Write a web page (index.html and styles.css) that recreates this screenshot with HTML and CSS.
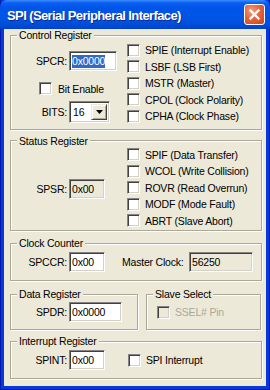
FILE: index.html
```html
<!DOCTYPE html>
<html>
<head>
	<title>SPI (Serial Peripheral Interface)</title>
	<link rel="stylesheet" href="styles.css">
</head>
<body>

	<div class="window">

		<div class="titlebar">
			<span class="title">SPI (Serial Peripheral Interface)</span>
			<div class="close">
				<svg width="13" height="13" viewBox="0 0 13 13"><path d="M2.5 2.5 L10.5 10.5 M10.5 2.5 L2.5 10.5" stroke="#fff" stroke-width="2.4" stroke-linecap="square"/></svg>
			</div>
		</div>

		<div class="client">

			<fieldset class="group control">
				<legend>Control Register</legend>
				<div class="left">
					<div class="row spcr">
						<span class="label">SPCR:</span>
						<div class="edit w47"><span class="sel">0x0000</span></div>
					</div>
					<div class="row bitenable">
						<div class="check"></div>
						<span>Bit Enable</span>
					</div>
					<div class="row bits">
						<span class="label">BITS:</span>
						<div class="combo">
							<span class="value">16</span>
							<div class="drop">
								<svg width="7" height="4" viewBox="0 0 7 4"><path d="M0 0 H7 L3.5 4 Z" fill="#000"/></svg>
							</div>
						</div>
					</div>
				</div>
				<div class="checks">
					<div class="crow"><div class="check"></div><span>SPIE (Interrupt Enable)</span></div>
					<div class="crow"><div class="check"></div><span>LSBF (LSB First)</span></div>
					<div class="crow"><div class="check"></div><span>MSTR (Master)</span></div>
					<div class="crow"><div class="check"></div><span>CPOL (Clock Polarity)</span></div>
					<div class="crow"><div class="check"></div><span>CPHA (Clock Phase)</span></div>
				</div>
			</fieldset>

			<fieldset class="group status">
				<legend>Status Register</legend>
				<div class="left">
					<div class="row">
						<span class="label">SPSR:</span>
						<div class="edit w35 readonly">0x00</div>
					</div>
				</div>
				<div class="checks">
					<div class="crow"><div class="check"></div><span>SPIF (Data Transfer)</span></div>
					<div class="crow"><div class="check"></div><span>WCOL (Write Collision)</span></div>
					<div class="crow"><div class="check"></div><span>ROVR (Read Overrun)</span></div>
					<div class="crow"><div class="check"></div><span>MODF (Mode Fault)</span></div>
					<div class="crow"><div class="check"></div><span>ABRT (Slave Abort)</span></div>
				</div>
			</fieldset>

			<fieldset class="group clock">
				<legend>Clock Counter</legend>
				<div class="row">
					<span class="label">SPCCR:</span>
					<div class="edit w35">0x00</div>
					<span class="master">Master Clock:</span>
					<div class="edit w63 readonly">56250</div>
				</div>
			</fieldset>

			<div class="pair">
				<fieldset class="group data">
					<legend>Data Register</legend>
					<div class="row">
						<span class="label">SPDR:</span>
						<div class="edit w53">0x0000</div>
					</div>
				</fieldset>
				<fieldset class="group slave">
					<legend>Slave Select</legend>
					<div class="crow disabled"><div class="check"></div><span>SSEL# Pin</span></div>
				</fieldset>
			</div>

			<fieldset class="group interrupt">
				<legend>Interrupt Register</legend>
				<div class="row">
					<span class="label">SPINT:</span>
					<div class="edit w35">0x00</div>
					<div class="crow"><div class="check"></div><span>SPI Interrupt</span></div>
				</div>
			</fieldset>

		</div>
	</div>

</body>
</html>
```

FILE: styles.css
```css
body {
	margin: 0;
	background-color: #ECE9D8;
	font-family: 'Liberation Sans', Arial, sans-serif;
	font-size: 10.5px;
	letter-spacing: -0.2px;
	color: #000;
}

.window {
	width: 270px;
	height: 390px;
	box-sizing: border-box;
	display: flex;
	flex-direction: column;
	padding: 0 4px 4px 4px;
	background-color: #0838D8;
	box-shadow: inset 1px 0 #0019B0, inset -1px 0 #001AA8, inset 0 -1px #001AA8;
}

/* Title bar */
.titlebar {
	height: 29px;
	flex: none;
	display: flex;
	align-items: center;
	margin: 0 -4px;
	padding: 0 5px 0 7px;
	border-radius: 7px 7px 0 0;
	background: linear-gradient(#3A8CFF 0, #0A5EF0 3px, #0055E8 8px, #0054E3 20px, #0048D0 27px, #0041C6 29px);
}

.titlebar .title {
	flex: 1;
	color: white;
	font-weight: bold;
	font-size: 13px;
	letter-spacing: -0.6px;
	padding-top: 1px;
	text-shadow: 1px 1px #0C2A8C;
}

.titlebar .close {
	width: 21px;
	height: 21px;
	box-sizing: border-box;
	display: flex;
	align-items: center;
	justify-content: center;
	border: 1px solid white;
	border-radius: 3px;
	background: radial-gradient(circle at 35% 30%, #F29A7E 0, #E5643F 45%, #D0411D 100%);
}

/* Client area */
.client {
	flex: 1;
	display: flex;
	flex-direction: column;
	background-color: #ECE9D8;
	padding: 0 4px 0 6px;
}

.group {
	margin: 0;
	padding: 0;
	min-width: 0;
	border: 1px solid #ACA899;
	box-shadow: 1px 1px 0 white, inset 1px 1px 0 white;
	display: flex;
}

.group legend {
	margin-left: 6px;
	padding: 0 2px;
	line-height: 12px;
	background-color: #ECE9D8;
}

.row {
	display: flex;
	align-items: center;
}

.label {
	width: 56px;
	margin-right: 2px;
	text-align: right;
	flex: none;
}

.edit {
	height: 20px;
	box-sizing: border-box;
	display: flex;
	align-items: center;
	padding-left: 2px;
	background-color: white;
	border: 1px solid;
	border-color: #848284 white white #848284;
	box-shadow: inset 1px 1px #404040, inset -1px -1px #D4D0C8;
	flex: none;
}

.edit.readonly {
	background-color: #ECE9D8;
}

.edit .sel {
	background-color: #316AC5;
	color: white;
	line-height: 13px;
}

.w35 { width: 36px; }
.w47 { width: 48px; }
.w53 { width: 53px; }
.w63 { width: 64px; }

.check {
	width: 13px;
	height: 13px;
	box-sizing: border-box;
	flex: none;
	background-color: white;
	border: 1px solid;
	border-color: #848284 white white #848284;
	box-shadow: inset 1px 1px #404040, inset -1px -1px #D4D0C8;
}

.crow {
	display: flex;
	align-items: center;
	height: 16.5px;
}

.crow .check {
	margin-right: 5px;
}

.crow.disabled {
	color: #ACA899;
	padding-left: 10px;
}

.crow.disabled .check {
	background-color: #ECE9D8;
}

/* Control Register */
.left {
	width: 116px;
	flex: none;
	display: flex;
	flex-direction: column;
}

.checks {
	display: flex;
	flex-direction: column;
}

.control {
	padding-bottom: 4px;
}

.control .checks {
	padding-top: 1px;
}

.control .spcr {
	margin-top: 10px;
}

.control .bitenable {
	margin-top: 11px;
	padding-left: 28px;
}

.control .bitenable .check {
	margin-right: 6px;
}

.control .bits {
	margin-top: 6px;
}

.combo {
	width: 41px;
	height: 22px;
	box-sizing: border-box;
	display: flex;
	align-items: center;
	background-color: white;
	border: 1px solid;
	border-color: #848284 white white #848284;
	box-shadow: inset 1px 1px #404040, inset -1px -1px #D4D0C8;
	padding: 2px;
}

.combo .value {
	flex: 1;
	padding-left: 1px;
}

.combo .drop {
	width: 16px;
	height: 16px;
	box-sizing: border-box;
	display: flex;
	align-items: center;
	justify-content: center;
	background-color: #ECE9D8;
	border: 1px solid;
	border-color: #ECE9D8 #404040 #404040 #ECE9D8;
	box-shadow: inset 1px 1px white, inset -1px -1px #ACA899;
}

/* Status Register */
.status {
	margin-top: 5px;
	padding-bottom: 1px;
}

.status .left {
	justify-content: center;
	padding-top: 3px;
}

/* Clock Counter */
.clock {
	margin-top: 6px;
	padding: 3px 0 8px 0;
}

.clock .master {
	width: 64px;
	margin-left: 17px;
	margin-right: 3px;
}

/* Data / Slave */
.pair {
	display: flex;
	margin-top: 7px;
	gap: 8px;
}

.data {
	width: 128px;
	box-sizing: border-box;
	padding: 2px 0 7px 0;
}

.slave {
	width: 115px;
	box-sizing: border-box;
	padding-top: 4px;
}

/* Interrupt Register */
.interrupt {
	margin-top: 5px;
	padding: 3px 0 8px 0;
}

.interrupt .crow {
	margin-left: 23px;
}
```
